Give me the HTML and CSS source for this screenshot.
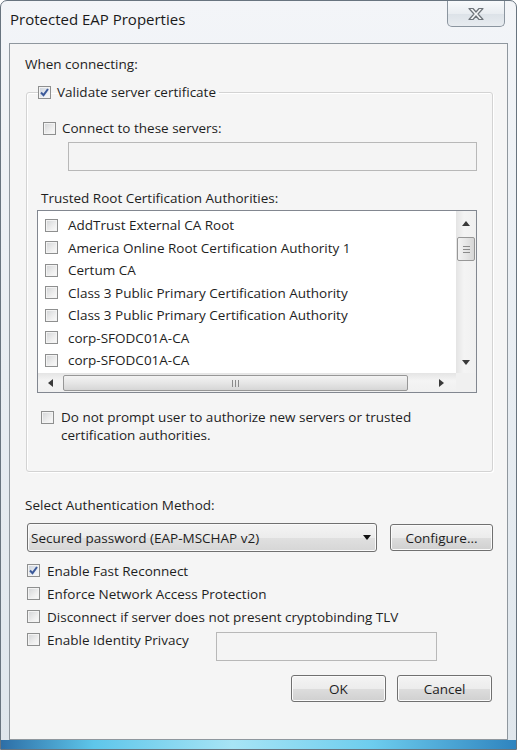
FILE: index.html
```html
<!DOCTYPE html>
<html lang="en">
<head>
    <meta charset="UTF-8">
    <meta name="viewport" content="width=device-width, initial-scale=1.0">
    <title>Protected EAP Properties</title>
    <link rel="stylesheet" href="styles.css">
</head>
<body>
    <div class="window">
        <div class="titlebar">
            <span class="title">Protected EAP Properties</span>
            <button class="close" type="button">
                <svg width="18" height="14" viewBox="0 0 18 14">
                    <path d="M2 1.5 H6 L9 5 L12 1.5 H16 L11 7 L16 12.5 H12 L9 9 L6 12.5 H2 L7 7 Z" fill="#f6f7f8" stroke="#6e747a" stroke-width="1.2" stroke-linejoin="round"/>
                </svg>
            </button>
        </div>

        <div class="panel">
            <div class="label connecting">When connecting:</div>

            <fieldset class="group">
                <legend>
                    <span class="check">
                        <span class="box checked">
                            <svg width="11" height="11" viewBox="0 0 11 11"><path d="M2 5.5 L4.5 8.2 L9 2" fill="none" stroke="#3c5a9a" stroke-width="2"/></svg>
                        </span>
                        Validate server certificate
                    </span>
                </legend>

                <div class="check connect"><span class="box"></span>Connect to these servers:</div>
                <div class="textbox servers"></div>

                <div class="label trusted">Trusted Root Certification Authorities:</div>
                <div class="listbox">
                    <div class="list-main">
                        <ul class="items">
                            <li><span class="box"></span>AddTrust External CA Root</li>
                            <li><span class="box"></span>America Online Root Certification Authority 1</li>
                            <li><span class="box"></span>Certum CA</li>
                            <li><span class="box"></span>Class 3 Public Primary Certification Authority</li>
                            <li><span class="box"></span>Class 3 Public Primary Certification Authority</li>
                            <li><span class="box"></span>corp-SFODC01A-CA</li>
                            <li><span class="box"></span>corp-SFODC01A-CA</li>
                        </ul>
                        <div class="vscroll">
                            <div class="sbtn up-btn"><span class="arrow up"></span></div>
                            <div class="thumb vthumb"><span></span><span></span><span></span></div>
                            <div class="track"></div>
                            <div class="sbtn down-btn"><span class="arrow down"></span></div>
                        </div>
                    </div>
                    <div class="hscroll">
                        <div class="sbtn left-btn"><span class="arrow left"></span></div>
                        <div class="thumb hthumb"><span></span><span></span><span></span></div>
                        <div class="track"></div>
                        <div class="sbtn right-btn"><span class="arrow right"></span></div>
                        <div class="corner"></div>
                    </div>
                </div>

                <div class="check prompt">
                    <span class="box"></span>
                    <span>Do not prompt user to authorize new servers or trusted<br>certification authorities.</span>
                </div>
            </fieldset>

            <div class="label method">Select Authentication Method:</div>
            <div class="method-row">
                <div class="combo">
                    <span>Secured password (EAP-MSCHAP v2)</span>
                    <span class="drop"></span>
                </div>
                <button class="btn configure" type="button">Configure...</button>
            </div>

            <div class="options">
                <div class="check opt">
                    <span class="box checked">
                        <svg width="11" height="11" viewBox="0 0 11 11"><path d="M2 5.5 L4.5 8.2 L9 2" fill="none" stroke="#3c5a9a" stroke-width="2"/></svg>
                    </span>
                    Enable Fast Reconnect
                </div>
                <div class="check opt"><span class="box"></span>Enforce Network Access Protection</div>
                <div class="check opt"><span class="box"></span>Disconnect if server does not present cryptobinding TLV</div>
                <div class="privacy">
                    <div class="check opt"><span class="box"></span>Enable Identity Privacy</div>
                    <div class="textbox identity"></div>
                </div>
            </div>

            <div class="footer">
                <button class="btn" type="button">OK</button>
                <button class="btn" type="button">Cancel</button>
            </div>
        </div>
    </div>
</body>
</html>
```

FILE: styles.css
```css
* {
    box-sizing: border-box;
}
body {
    margin: 0;
    font-family: "Open Sans", "Noto Sans", Arial, sans-serif;
    font-size: 13.5px;
    color: #1e1e1e;
}
.window {
    width: 517px;
    height: 750px;
    display: flex;
    flex-direction: column;
    padding: 0 8px 9px 8px;
    border: 1px solid #68747f;
    border-radius: 7px 7px 0 0;
    background:
        linear-gradient(to right, #2d6ea6 0, #5ec6ea 18%, #a7e4f5 45%, #6dcdee 72%, #2f84bf 100%) bottom / 100% 9px no-repeat,
        linear-gradient(to bottom, #f3f5f8 0, #e8edf2 50%, #dfe6ec 100%);
}
.titlebar {
    height: 42px;
    display: flex;
    justify-content: space-between;
    align-items: flex-start;
}
.title {
    margin: 8px 0 0 1px;
    font-size: 15px;
    line-height: 20px;
    color: #1a1a1a;
}
.close {
    width: 58px;
    height: 26px;
    margin-right: 3px;
    padding: 0;
    border: 1px solid #8b959f;
    border-top: none;
    border-radius: 0 0 5px 5px;
    background: linear-gradient(#f8fafc 0, #e9edf1 50%, #dce2e8 51%, #e8ecf0 100%);
    display: flex;
    align-items: center;
    justify-content: center;
}
.panel {
    flex: 1;
    border: 1px solid #8f979e;
    background: #f5f5f5;
    display: flex;
    flex-direction: column;
}
.label {
    line-height: 18px;
    margin-left: 15px;
}
.connecting {
    margin-top: 11px;
}

/* checkboxes */
.check {
    display: flex;
    align-items: center;
    gap: 6px;
    line-height: 18px;
}
.box {
    width: 13px;
    height: 13px;
    flex: none;
    border: 1px solid #8e8f8f;
    background: linear-gradient(135deg, #d2d4d6 0, #eeeeee 60%, #fbfbfb 100%);
    box-shadow: inset 0 0 0 1px #f3f3f3;
    display: flex;
    align-items: center;
    justify-content: center;
}
.box.checked {
    background: linear-gradient(135deg, #c9d0da 0, #eef1f5 70%, #fafafa 100%);
}

/* group box */
.group {
    margin: 10px 0 0 16px;
    width: 467px;
    min-inline-size: 0;
    padding: 0 0 27px 0;
    border: 1px solid #d3d3d3;
    border-radius: 3px;
    box-shadow: inset 1px 1px 0 #fff, 1px 1px 0 #fff;
}
.group legend {
    margin-left: 11px;
    padding: 0 3px 0 0;
}
.connect {
    margin: 18px 0 0 16px;
}
.textbox {
    height: 29px;
    border: 1px solid #b8b8b8;
    background: #f4f4f4;
}
.servers {
    margin: 5px 0 0 41px;
    width: 409px;
}
.trusted {
    margin: 18px 0 0 14px;
}
.listbox {
    margin: 3px 0 0 10px;
    width: 440px;
    height: 183px;
    border: 1px solid #828790;
    background: #fff;
    display: flex;
    flex-direction: column;
}
.list-main {
    flex: 1;
    display: flex;
    min-height: 0;
}
.items {
    flex: 1;
    list-style: none;
    margin: 0;
    padding: 3px 0 0 7px;
    overflow: hidden;
}
.items li {
    height: 22.5px;
    display: flex;
    align-items: center;
    gap: 10px;
    white-space: nowrap;
}

/* scrollbars */
.vscroll {
    width: 20px;
    display: flex;
    flex-direction: column;
    background: linear-gradient(to right, #e4e4e4 0, #f4f4f4 40%, #f0f0f0 100%);
}
.hscroll {
    height: 19px;
    display: flex;
    background: linear-gradient(to bottom, #e4e4e4 0, #f4f4f4 40%, #f0f0f0 100%);
}
.track {
    flex: 1;
}
.sbtn {
    display: flex;
    align-items: center;
    justify-content: center;
}
.up-btn {
    height: 24px;
}
.down-btn {
    height: 22px;
}
.left-btn {
    width: 24px;
}
.right-btn {
    width: 30px;
}
.corner {
    width: 20px;
    background: #f0f0f0;
}
.arrow {
    width: 0;
    height: 0;
    border: 4px solid transparent;
}
.arrow.up {
    border-bottom: 5px solid #3a3a3a;
    border-top: none;
}
.arrow.down {
    border-top: 5px solid #3a3a3a;
    border-bottom: none;
}
.arrow.left {
    border-right: 5px solid #3a3a3a;
    border-left: none;
}
.arrow.right {
    border-left: 5px solid #3a3a3a;
    border-right: none;
}
.thumb {
    border: 1px solid #979797;
    border-radius: 2px;
    display: flex;
    align-items: center;
    justify-content: center;
    gap: 2px;
}
.thumb span {
    background: #8a8a8a;
}
.vthumb {
    height: 24px;
    margin: 2px 1px 0 1px;
    flex-direction: column;
    background: linear-gradient(to right, #f3f3f3 0, #e6e6e6 50%, #d6d6d6 100%);
}
.vthumb span {
    width: 7px;
    height: 1px;
}
.hthumb {
    width: 345px;
    margin: 2px 0 1px 1px;
    background: linear-gradient(to bottom, #f3f3f3 0, #e6e6e6 50%, #d6d6d6 100%);
}
.hthumb span {
    width: 1px;
    height: 7px;
}

.prompt {
    margin: 15px 0 0 14px;
    align-items: flex-start;
    gap: 7px;
}
.prompt .box {
    margin-top: 3px;
}

/* authentication method */
.method {
    margin-top: 24px;
}
.method-row {
    margin: 9px 0 0 17px;
    display: flex;
    align-items: center;
    gap: 13px;
}
.combo {
    width: 350px;
    height: 29px;
    padding: 0 5px 0 3px;
    border: 1px solid #707070;
    border-radius: 3px;
    background: linear-gradient(#f4f4f4 0, #ececec 50%, #e0e0e0 51%, #d6d6d6 100%);
    box-shadow: inset 0 0 0 1px #fafafa;
    display: flex;
    align-items: center;
    justify-content: space-between;
}
.drop {
    width: 0;
    height: 0;
    border-left: 4px solid transparent;
    border-right: 4px solid transparent;
    border-top: 5px solid #111;
}
.btn {
    width: 95px;
    height: 27px;
    padding: 0;
    font: inherit;
    color: #1e1e1e;
    border: 1px solid #707070;
    border-radius: 3px;
    background: linear-gradient(#f4f4f4 0, #ececec 50%, #dddddd 51%, #d0d0d0 100%);
    box-shadow: inset 0 0 0 1px #fbfbfb;
}
.configure {
    width: 103px;
}
.options {
    margin-top: 7px;
}
.opt {
    height: 23px;
    margin-left: 17px;
    gap: 7px;
}
.privacy {
    display: flex;
    align-items: flex-start;
}
.privacy .opt {
    width: 189px;
}
.identity {
    width: 221px;
    margin-top: 4px;
}
.footer {
    margin: 14px 15px 0 0;
    display: flex;
    justify-content: flex-end;
    gap: 11px;
}
```
